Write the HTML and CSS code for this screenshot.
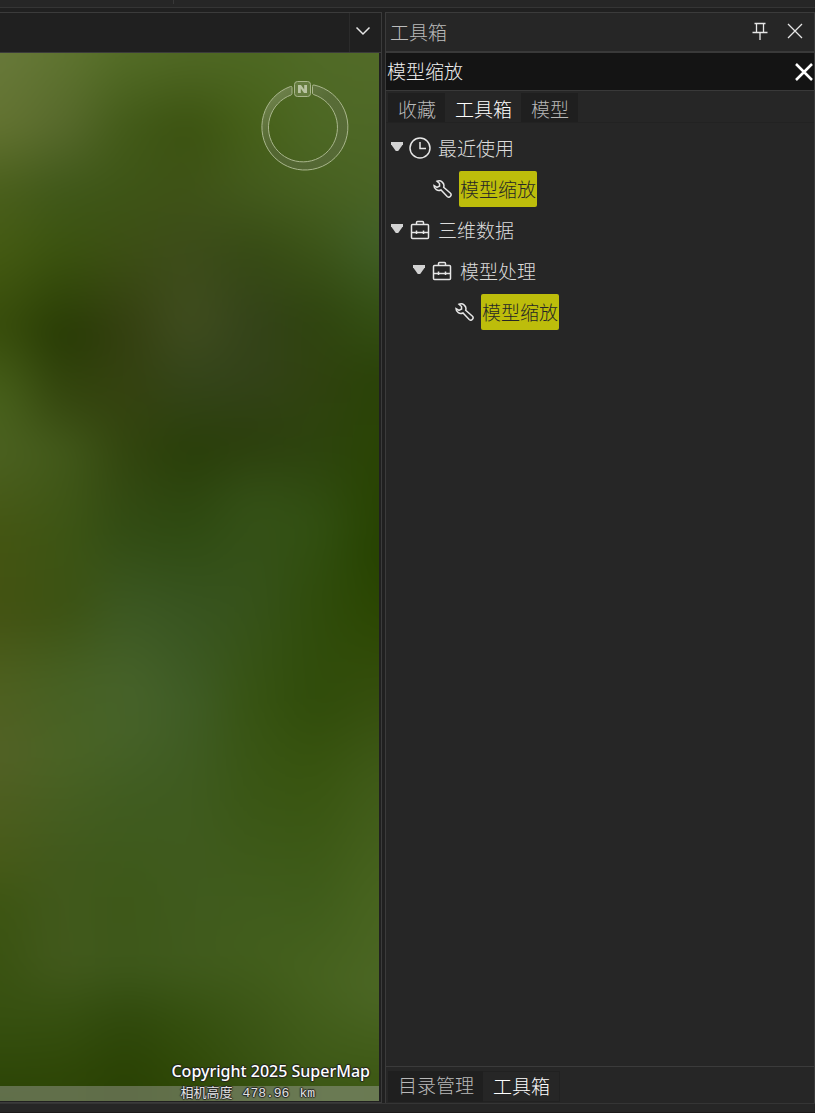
FILE: index.html
```
<!DOCTYPE html>
<html lang="zh-CN">

<head>
    <meta charset="UTF-8">
    <meta name="viewport" content="width=device-width, initial-scale=1.0">

    <link rel="stylesheet" href="styles.css">

    <title>工具箱</title>
</head>

<body>
    <div class="ribbon"><span class="ribbon_sep"></span></div>

    <main class="workspace">
        <section class="scene">
            <header class="scene_header">
                <button class="scene_menu" type="button" aria-label="窗口列表">
                    <svg width="16" height="10" viewBox="0 0 16 10"><path d="M1.500 1.500L8 8L14.500 1.500" /></svg>
                </button>
            </header>
            <div class="map">
                <!-- Terrain: vertical strips blurred into each other -->
                <svg class="terrain" viewBox="0 0 380 1048" preserveAspectRatio="none" aria-hidden="true">
                    <defs>
                        <filter id="soften" filterUnits="userSpaceOnUse" x="-140" y="-100" width="660" height="1250" color-interpolation-filters="sRGB">
                            <feGaussianBlur stdDeviation="26 14" />
                        </filter>
                        <linearGradient id="g0" gradientUnits="userSpaceOnUse" x1="0" y1="0" x2="0" y2="1048">
                            <stop offset="0%" stop-color="#68793a" /><stop offset="7%" stop-color="#637331" /><stop offset="13%" stop-color="#4a5f1c" /><stop offset="19%" stop-color="#445a12" /><stop offset="26%" stop-color="#384d0b" /><stop offset="33%" stop-color="#48611b" /><stop offset="38%" stop-color="#4b6120" /><stop offset="46%" stop-color="#445512" /><stop offset="53%" stop-color="#435212" /><stop offset="60%" stop-color="#4d5f1e" /><stop offset="67%" stop-color="#526125" /><stop offset="77%" stop-color="#475a18" /><stop offset="81%" stop-color="#3d5512" /><stop offset="92%" stop-color="#375010" /><stop offset="99%" stop-color="#2c4506" />
                        </linearGradient>
                        <linearGradient id="g1" gradientUnits="userSpaceOnUse" x1="0" y1="0" x2="0" y2="1048">
                            <stop offset="0%" stop-color="#5f7430" /><stop offset="7%" stop-color="#57692c" /><stop offset="13%" stop-color="#40581a" /><stop offset="19%" stop-color="#3a520e" /><stop offset="27%" stop-color="#273a04" /><stop offset="33%" stop-color="#34460e" /><stop offset="38%" stop-color="#42591a" /><stop offset="46%" stop-color="#3d5514" /><stop offset="53%" stop-color="#3c5212" /><stop offset="60%" stop-color="#466022" /><stop offset="67%" stop-color="#4a6324" /><stop offset="77%" stop-color="#41591c" /><stop offset="87%" stop-color="#42591c" /><stop offset="92%" stop-color="#365010" /><stop offset="98%" stop-color="#2e4606" />
                        </linearGradient>
                        <linearGradient id="g2" gradientUnits="userSpaceOnUse" x1="0" y1="0" x2="0" y2="1048">
                            <stop offset="0%" stop-color="#536c26" /><stop offset="7%" stop-color="#425a18" /><stop offset="13%" stop-color="#3e5516" /><stop offset="19%" stop-color="#3c4e14" /><stop offset="26%" stop-color="#343f10" /><stop offset="33%" stop-color="#34420f" /><stop offset="38%" stop-color="#32450e" /><stop offset="46%" stop-color="#324c14" /><stop offset="53%" stop-color="#3c5822" /><stop offset="60%" stop-color="#466229" /><stop offset="65%" stop-color="#466228" /><stop offset="71%" stop-color="#405c20" /><stop offset="81%" stop-color="#3d5818" /><stop offset="87%" stop-color="#3d581a" /><stop offset="92%" stop-color="#30490c" /><stop offset="97%" stop-color="#2a4204" />
                        </linearGradient>
                        <linearGradient id="g3" gradientUnits="userSpaceOnUse" x1="0" y1="0" x2="0" y2="1048">
                            <stop offset="0%" stop-color="#506824" /><stop offset="7%" stop-color="#3b5210" /><stop offset="13%" stop-color="#3e5216" /><stop offset="19%" stop-color="#3d4c1a" /><stop offset="26%" stop-color="#404d1f" /><stop offset="31%" stop-color="#35451a" /><stop offset="38%" stop-color="#293e09" /><stop offset="46%" stop-color="#2f4b12" /><stop offset="53%" stop-color="#385420" /><stop offset="62%" stop-color="#3f5c26" /><stop offset="71%" stop-color="#3f5b1f" /><stop offset="87%" stop-color="#405a1c" /><stop offset="92%" stop-color="#35500f" /><stop offset="98%" stop-color="#2f4806" />
                        </linearGradient>
                        <linearGradient id="g4" gradientUnits="userSpaceOnUse" x1="0" y1="0" x2="0" y2="1048">
                            <stop offset="0%" stop-color="#4d6822" /><stop offset="7%" stop-color="#466018" /><stop offset="13%" stop-color="#435a1c" /><stop offset="19%" stop-color="#364a14" /><stop offset="25%" stop-color="#344319" /><stop offset="31%" stop-color="#334219" /><stop offset="37%" stop-color="#2c3f0d" /><stop offset="43%" stop-color="#345016" /><stop offset="52%" stop-color="#36521a" /><stop offset="62%" stop-color="#375312" /><stop offset="71%" stop-color="#3a5615" /><stop offset="81%" stop-color="#405c1c" /><stop offset="86%" stop-color="#425e1c" /><stop offset="92%" stop-color="#3c5616" /><stop offset="98%" stop-color="#365010" />
                        </linearGradient>
                        <linearGradient id="g5" gradientUnits="userSpaceOnUse" x1="0" y1="0" x2="0" y2="1048">
                            <stop offset="0%" stop-color="#506a26" /><stop offset="7%" stop-color="#4d6824" /><stop offset="13%" stop-color="#476020" /><stop offset="18%" stop-color="#3d5518" /><stop offset="25%" stop-color="#2f440f" /><stop offset="31%" stop-color="#30420f" /><stop offset="38%" stop-color="#2d440e" /><stop offset="45%" stop-color="#325012" /><stop offset="52%" stop-color="#304c0c" /><stop offset="62%" stop-color="#304c0a" /><stop offset="69%" stop-color="#38540f" /><stop offset="81%" stop-color="#3f5c1a" /><stop offset="88%" stop-color="#46621e" /><stop offset="98%" stop-color="#3d5816" />
                        </linearGradient>
                        <linearGradient id="g6" gradientUnits="userSpaceOnUse" x1="0" y1="0" x2="0" y2="1048">
                            <stop offset="0%" stop-color="#526b28" /><stop offset="13%" stop-color="#4a6424" /><stop offset="18%" stop-color="#426028" /><stop offset="24%" stop-color="#365216" /><stop offset="31%" stop-color="#2a4208" /><stop offset="38%" stop-color="#2a4404" /><stop offset="48%" stop-color="#264200" /><stop offset="54%" stop-color="#2c4702" /><stop offset="62%" stop-color="#364f0e" /><stop offset="69%" stop-color="#3f5a18" /><stop offset="81%" stop-color="#48641f" /><stop offset="90%" stop-color="#4b6624" /><stop offset="98%" stop-color="#3d5814" />
                        </linearGradient>
                    </defs>
                    <g filter="url(#soften)">
                        <rect x="-140" y="-100" width="172" height="1250" fill="url(#g0)" />
                        <rect x="31" y="-100" width="65" height="1250" fill="url(#g1)" />
                        <rect x="95" y="-100" width="64" height="1250" fill="url(#g2)" />
                        <rect x="158" y="-100" width="64" height="1250" fill="url(#g3)" />
                        <rect x="221" y="-100" width="65" height="1250" fill="url(#g4)" />
                        <rect x="285" y="-100" width="64" height="1250" fill="url(#g5)" />
                        <rect x="348" y="-100" width="172" height="1250" fill="url(#g6)" />
                    </g>
                </svg>

                <svg class="compass" width="90" height="92" viewBox="0 0 90 92" role="img" aria-label="N">
                    <defs>
                        <linearGradient id="ring" x1="0" y1="0" x2="1" y2="1">
                            <stop offset="0" stop-color="#b4c09a" stop-opacity=".45" />
                            <stop offset=".45" stop-color="#6f7560" stop-opacity=".3" />
                            <stop offset="1" stop-color="#6f7560" stop-opacity=".3" />
                        </linearGradient>
                    </defs>
                    <path class="compass_ring" fill="url(#ring)" d="M31.500 6.500Q33 6 33 7.500V13.500Q33 14.500 32 15A34.500 34.500 0 1 0 54.500 14.500Q53.500 14 53.500 13V6.500Q53.500 4.500 55 5A43 43 0 1 1 31.500 6.500Z" />
                    <rect class="compass_box" x="35.500" y="1.500" width="16" height="15" rx="3" />
                    <path class="compass_n" d="M39 13V5H42L45.200 9.500V5H48V13H45L41.800 8.500V13Z" />
                </svg>

                <p class="copyright">Copyright 2025 SuperMap</p>
                <div class="altitude"><span>相机高度</span><span class="altitude_num">478.96</span><span class="altitude_num">km</span></div>
            </div>
        </section>

        <aside class="dock">
            <header class="dock_title">
                <h1>工具箱</h1>
                <button class="icon_btn" type="button" aria-label="固定">
                    <svg width="16" height="20" viewBox="0 0 16 20"><path d="M2.500 2.500H13.500M4.500 2.500V11.500M11.500 2.500V11.500M.500 11.500H15.500M8 12V19" /></svg>
                </button>
                <button class="icon_btn" type="button" aria-label="关闭">
                    <svg width="16" height="16" viewBox="0 0 16 16"><path d="M1 1L15 15M15 1L1 15" /></svg>
                </button>
            </header>

            <div class="search">
                <input class="search_input" type="text" value="模型缩放" aria-label="搜索工具">
                <button class="search_clear" type="button" aria-label="清除">
                    <svg width="20" height="20" viewBox="0 0 20 20"><path d="M2 2L18 18M18 2L2 18" /></svg>
                </button>
            </div>

            <nav class="tabs">
                <button class="tab" type="button">收藏</button>
                <button class="tab active" type="button">工具箱</button>
                <button class="tab" type="button">模型</button>
            </nav>

            <ul class="tree">
                <li>
                    <div class="node">
                        <button class="toggle" type="button" aria-label="折叠 最近使用"></button>
                        <svg class="icon" width="22" height="22" viewBox="0 0 22 22"><circle cx="11" cy="11" r="10" /><path d="M11 5V11.500H17" /></svg>
                        <span class="label">最近使用</span>
                    </div>
                    <ul>
                        <li class="node leaf">
                            <svg class="icon" width="22" height="22" viewBox="0 0 22 22"><path d="M6 3.300A4.900 4.900 0 0 1 12.700 9.200L19.200 15A2.200 2.200 0 0 1 16.200 18.500L10 12A4.900 4.900 0 0 1 3 7.500L6 9.300L8.600 8L8.500 5.500Z" /></svg>
                            <mark class="label">模型缩放</mark>
                        </li>
                    </ul>
                </li>
                <li>
                    <div class="node">
                        <button class="toggle" type="button" aria-label="折叠 三维数据"></button>
                        <svg class="icon" width="22" height="22" viewBox="0 0 22 22"><rect x="2.500" y="5.500" width="17" height="14" rx="1" /><path d="M7.500 5.500V3.500Q7.500 2.500 8.500 2.500H13.500Q14.500 2.500 14.500 3.500V5.500M2.500 13.500H19.500M7.500 11.500V15M14.500 11.500V15" /></svg>
                        <span class="label">三维数据</span>
                    </div>
                    <ul>
                        <li>
                            <div class="node">
                                <button class="toggle" type="button" aria-label="折叠 模型处理"></button>
                                <svg class="icon" width="22" height="22" viewBox="0 0 22 22"><rect x="2.500" y="5.500" width="17" height="14" rx="1" /><path d="M7.500 5.500V3.500Q7.500 2.500 8.500 2.500H13.500Q14.500 2.500 14.500 3.500V5.500M2.500 13.500H19.500M7.500 11.500V15M14.500 11.500V15" /></svg>
                                <span class="label">模型处理</span>
                            </div>
                            <ul>
                                <li class="node leaf">
                                    <svg class="icon" width="22" height="22" viewBox="0 0 22 22"><path d="M6 3.300A4.900 4.900 0 0 1 12.700 9.200L19.200 15A2.200 2.200 0 0 1 16.200 18.500L10 12A4.900 4.900 0 0 1 3 7.500L6 9.300L8.600 8L8.500 5.500Z" /></svg>
                                    <mark class="label">模型缩放</mark>
                                </li>
                            </ul>
                        </li>
                    </ul>
                </li>
            </ul>

            <nav class="tabs dock_tabs">
                <button class="tab" type="button">目录管理</button>
                <button class="tab active" type="button">工具箱</button>
            </nav>
        </aside>
    </main>

    <footer class="statusbar"></footer>
</body>

</html>
```
FILE: styles.css
```
* {
    box-sizing: border-box;
}

body {
    display: flex;
    flex-direction: column;
    height: 100vh;
    margin: 0;
    overflow: hidden;
    background-color: #202020;
    color: #dcdcdc;
    font-family: "Noto Sans CJK SC", sans-serif;
    font-size: 19px;
    font-weight: 300;
}

button,
input {
    padding: 0;
    border: 0;
    background: none;
    color: inherit;
    font: inherit;
}

ul {
    margin: 0;
    padding: 0;
    list-style: none;
}

svg {
    display: block;
    flex: none;
    fill: none;
    stroke: #e6e6e6;
}

.ribbon {
    height: 8px;
    border-bottom: 1px solid #353535;
    background-color: #262626;
}

.ribbon_sep {
    display: block;
    width: 1px;
    height: 4px;
    margin-left: 173px;
    background-color: #383838;
}

.workspace {
    display: grid;
    grid-template-columns: minmax(0, 1fr) 430px;
    gap: 3px;
    flex: 1;
    min-height: 0;
    padding-top: 4px;
}

/* Scene window */
.scene {
    display: flex;
    flex-direction: column;
    border: 1px solid #3b3b3b;
    border-left: 0;
}

.scene_header {
    display: flex;
    justify-content: flex-end;
    height: 40px;
    border-bottom: 1px solid #3b3b3b;
}

.scene_menu {
    display: flex;
    align-items: center;
    justify-content: center;
    width: 32px;
    padding: 0 5px 3px 0;
    border-left: 1px solid #2b2b2b;
}

.scene_menu svg {
    stroke-width: 1.5;
}

.map {
    position: relative;
    display: flex;
    flex-direction: column;
    justify-content: flex-end;
    flex: 1;
    min-height: 0;
    margin: 0 2px 1px 0;
    overflow: hidden;
    background-color: #3c5618;
}

.terrain {
    position: absolute;
    inset: 0;
    width: 100%;
    height: 100%;
    stroke: none;
}

.compass {
    position: absolute;
    top: 27px;
    right: 30px;
    stroke: #a9b68c;
}

.compass_box {
    fill: #8a9a68;
    fill-opacity: .4;
}

.compass_n {
    fill: #b9c3a2;
    stroke: none;
}

.copyright {
    position: relative;
    margin: 0;
    padding: 0 9px 3px;
    color: #fff;
    font: 500 16px/24px "Noto Sans", sans-serif;
    text-align: right;
    text-shadow: 1px 0 1px #222, -1px 0 1px #222, 0 1px 1px #222, 0 -1px 1px #222;
}

.altitude {
    position: relative;
    display: flex;
    justify-content: flex-end;
    gap: 10px;
    height: 15px;
    padding-right: 64px;
    background-color: rgba(170, 170, 170, .42);
    color: #e2e2e2;
    font-size: 13px;
    font-weight: 400;
    line-height: 11px;
    text-shadow: 1px 0 1px #222, -1px 0 1px #222, 0 1px 1px #222, 0 -1px 1px #222;
}

.altitude_num {
    font-family: "Liberation Mono", monospace;
    line-height: 15px;
}

/* Toolbox dock */
.dock {
    display: flex;
    flex-direction: column;
    border: 1px solid #3b3b3b;
    border-bottom: 0;
    background-color: #262626;
}

.dock_title {
    display: flex;
    align-items: center;
    height: 40px;
    padding: 0 11px 2px 4px;
    border-bottom: 2px solid #393939;
}

.dock_title h1 {
    flex: 1;
    margin: 0;
    color: #bcbcbc;
    font-size: 19px;
    font-weight: 300;
}

.icon_btn {
    margin-left: 19px;
}

.icon_btn svg {
    stroke-width: 1.3;
}

.search {
    display: flex;
    align-items: center;
    height: 38px;
    border-bottom: 1px solid #393939;
    background-color: #141414;
}

.search_input {
    flex: 1;
    min-width: 0;
    height: 37px;
    padding: 0 0 2px 1px;
    color: #f0f0f0;
    outline: 0;
}

.search_clear svg {
    stroke: #fff;
    stroke-width: 2.5;
}

.tabs {
    display: flex;
    height: 32px;
    padding: 2px 0 0 2px;
    border-bottom: 1px solid #222;
}

.tab {
    padding: 2px 9px 0 10px;
    background-color: #1f1f1f;
    color: #b8b8b8;
    line-height: 27px;
}

.tab.active {
    background-color: #262626;
    color: #fff;
}

.tree {
    flex: 1;
    padding: 4px 0 0 5px;
}

.tree ul {
    padding-left: 22px;
}

.node {
    display: flex;
    align-items: center;
    height: 41px;
}

.leaf {
    padding-left: 18px;
}

.toggle {
    width: 12px;
    height: 9px;
    margin: 0 6px 2px 0;
    background-color: #d2d2d2;
    clip-path: polygon(0 0, 100% 0, 100% 25%, 60% 100%, 40% 100%, 0 25%);
}

.icon {
    margin-right: 6px;
    stroke-width: 1.5;
}

.label {
    padding: 0 1px;
    line-height: 36px;
}

mark.label {
    border-radius: 2px;
    background-color: #bdbd0b;
    color: #262626;
}

.dock_tabs {
    height: 37px;
    padding: 4px 0 1px 2px;
    border-top: 1px solid #3b3b3b;
    border-bottom: 0;
}

.dock_tabs .tab {
    padding-top: 0;
    padding-bottom: 4px;
    line-height: 27px;
}

.dock_tabs .active {
    border: 1px solid #212121;
    border-left: 0;
}

.statusbar {
    height: 10px;
    border-top: 1px solid #353535;
    border-bottom: 1px solid #1c1a1a;
    background-color: #262626;
}
```
